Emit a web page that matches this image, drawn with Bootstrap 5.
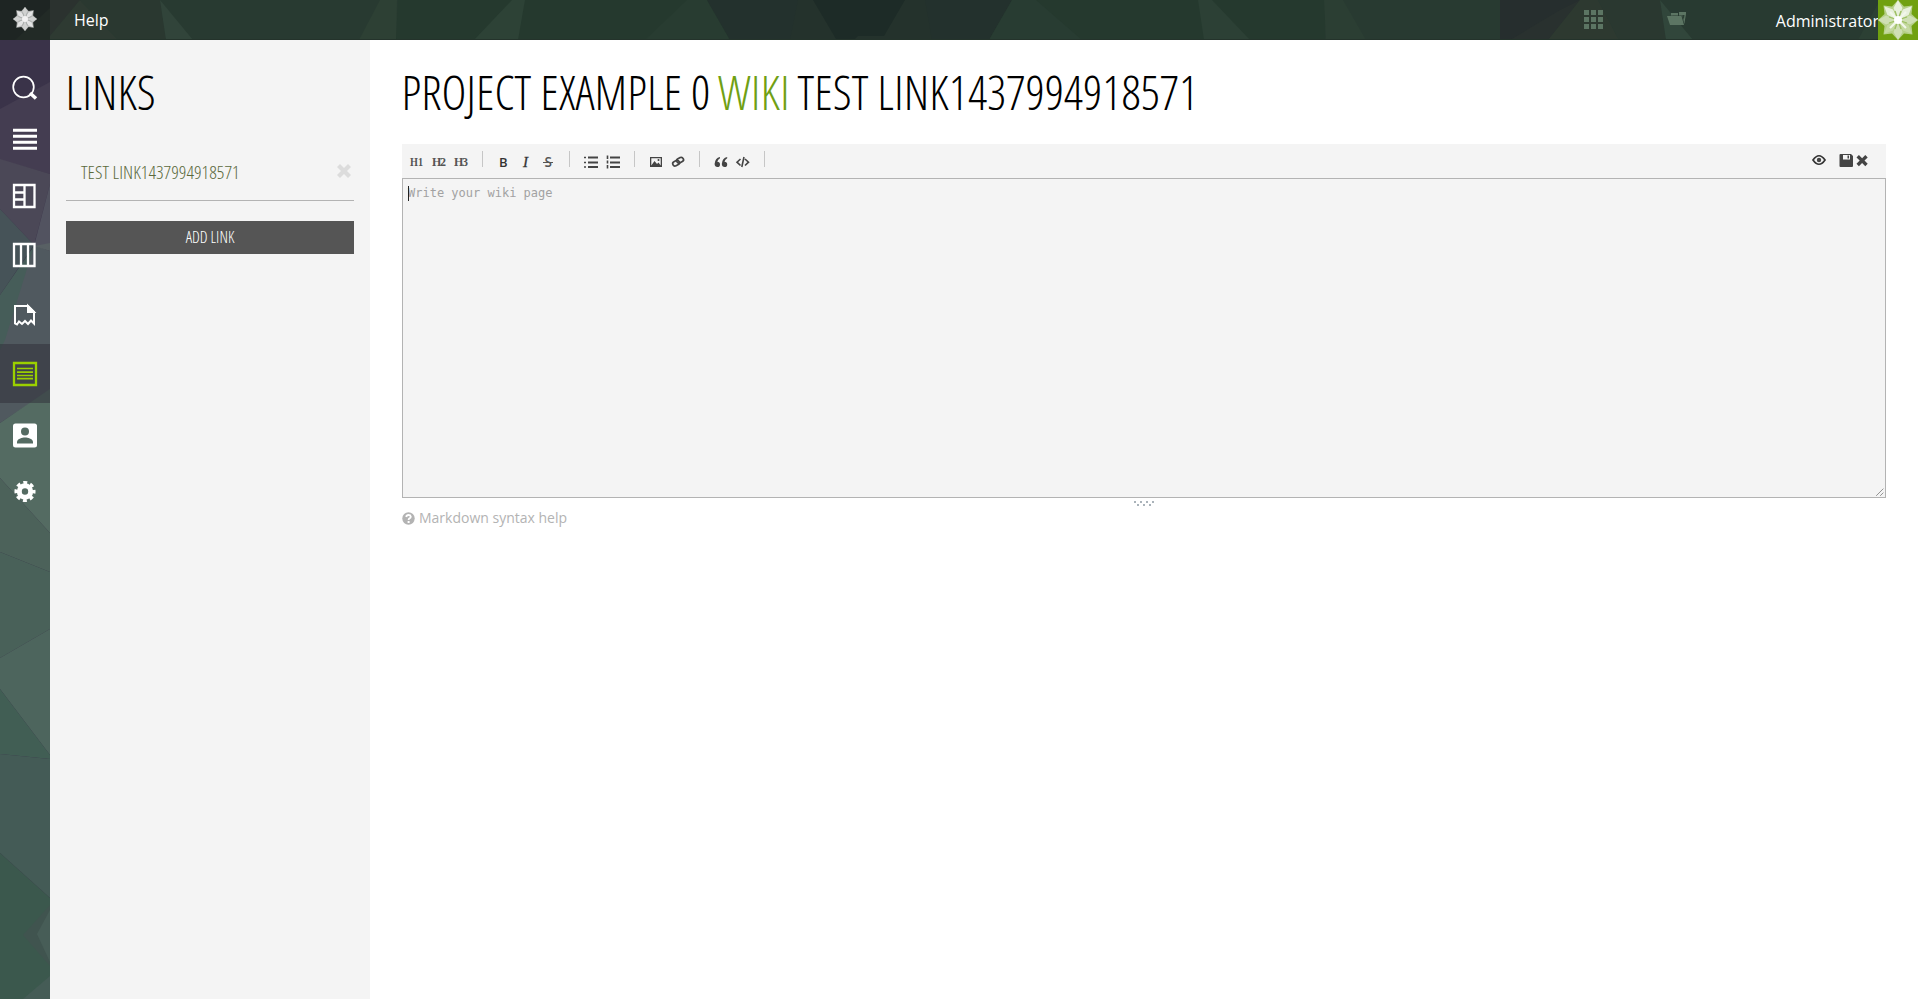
<!DOCTYPE html>
<html lang="en">
<head>
<meta charset="utf-8">
<title>Wiki</title>
<link rel="stylesheet" href="https://cdn.jsdelivr.net/npm/bootstrap@5.3.0/dist/css/bootstrap.min.css">
<style>
body{font-family:"Open Sans","Noto Sans",sans-serif;background:#fff;overflow:hidden}
.topbar{height:40px;background:#283a31}
.backdrop{left:0;top:0;z-index:0}
.topbar>*:not(.backdrop),.rail>*:not(.backdrop){position:relative;z-index:1}
.logo-cell{width:50px;height:40px}
.condensed{font-family:"Open Sans Condensed Light","OpenSans-CondensedLight","Open Sans Light","Open Sans",sans-serif;font-weight:300;font-stretch:75%;text-transform:uppercase}
.rail{width:50px;background:#48605a}
.rail a{display:block;height:59px;line-height:0}
.rail svg{display:block}
.rail .on{background:rgba(45,45,55,.5)}
.links{width:320px;background:#f4f4f4;padding:28px 16px 0}
.links h1,.page h1{font-size:48px;line-height:48px;color:#000;margin:0 0 0 -.5px;white-space:nowrap}
.link-row{height:59px;margin-top:26px;border-bottom:1px solid #b3b3b3;padding:3px 3px 0 15px}
.link-row a{font-size:19px;color:#5b6a3c}
.link-row svg{margin-bottom:3px}
.add-btn{height:33px;background:#555;color:#fff;font-size:16px;line-height:31px;border:0;border-radius:0;margin-top:20px;padding:0}
.page{padding:28px 32px 0}
.page h1 span{color:#70a013;margin:0 -1.2px}
.tools{height:34px;background:#f4f4f4;margin-top:28px}
.editor{height:320px;border:1px solid #b3b3b3;background:#f4f4f4;font:12px/18px "DejaVu Sans Mono",monospace;color:#a2a2a2;padding:5px}
.caret{left:5px;top:7px;width:1px;height:15px;background:#222}
.grip{right:1px;bottom:1px}
.mdhelp{font-size:14px;line-height:20px;color:#b3b3b3;margin-top:1px}
</style>
</head>
<body class="vh-100 d-flex flex-column">
<svg width="0" height="0" class="position-absolute"><defs>
<path id="star" d="M0-20L6-13.500L14.500-14.500L13.500-6L20 0L13.500 6L14.500 14.500L6 13.500L0 20L-6 13.500L-14.500 14.500L-13.500 6L-20 0L-13.500-6L-14.500-14.500L-6-13.500Z"/>
<path id="kite" d="M0 0L-4.500-12L0-20L4.500-12Z"/>
<path id="kite2" d="M0 0L-4-11L0-19.500L4-11Z"/>
<path id="cross" d="M3 0L7 4L11 0L14 3L10 7L14 11L11 14L7 10L3 14L0 11L4 7L0 3Z"/>
</defs></svg>
<header class="topbar d-flex align-items-center flex-shrink-0 position-relative">
<svg class="backdrop position-absolute" width="1918" height="40">
<path fill="#25392e" d="M398 0H1325V40H396Z"/>
<path fill="#2b322f" d="M50 0H80L50 36Z"/><path fill="#2e3a32" d="M80 0L118 40H50V36Z"/><path fill="#2a3830" d="M80 0H160L166 40H118Z"/>
<path fill="#31443a" d="M160 0L193 40H166Z"/><path fill="#2d4034" d="M380 0H397L396 40H359Z"/>
<path fill="#2d4236" d="M512 0H525L518 40H474Z"/><path fill="#283c31" d="M687 0H707L730 40H645Z"/>
<path fill="#23312d" d="M707 0H1012L989 40H730Z"/><path fill="#24322c" d="M798 0H925L932 40H790Z"/><path fill="#1d2b27" d="M813 0H905L884 36H858L855 39H836Z"/>
<path fill="#283c32" d="M1012 0H1036L1082 40H989Z"/><path fill="#2c4035" d="M1198 0H1212L1250 40H1204Z"/><path fill="#2b3e33" d="M1324 0H1343L1366 40H1326Z"/>
<path fill="#262e2e" d="M1500 0H1580L1548 40H1500Z"/><path fill="#29312f" d="M1560 10L1510 40H1548L1580 0Z"/><path fill="#2d3930" d="M1580 0H1598L1619 40H1548Z"/><path fill="#2a3830" d="M1598 0H1660L1666 40H1619Z"/>
<path fill="#31463b" d="M1660 0L1693 40H1666Z"/><path fill="#2c4034" d="M1880 0V40H1858Z"/>
<path fill="#1e2523" d="M0 0H50V40H0Z"/><path fill="#222a26" d="M50 8V40H15Z"/><path stroke="#24332b" d="M50 39.5H1918"/>
</svg>
<a class="logo-cell"><svg width="50" height="40"><g transform="translate(25 19) scale(.6)"><use href="#star" fill="#b4b6b5"/><g fill="#e3e4e4"><use href="#kite2" transform="rotate(45)"/><use href="#kite2" transform="rotate(135)"/><use href="#kite2" transform="rotate(225)"/><use href="#kite2" transform="rotate(315)"/></g><g fill="#cfd1d0"><use href="#kite"/><use href="#kite" transform="rotate(90)"/><use href="#kite" transform="rotate(180)"/><use href="#kite" transform="rotate(270)"/></g><path stroke="#a0a4a2" stroke-width="1.300" d="M-4-11L4 11M4-11L-4 11M-11-4L11 4M-11 4L11-4"/><circle r="5" fill="#f2f2f2"/></g></svg></a>
<a class="text-white text-decoration-none ms-4">Help</a>
<div class="ms-auto d-flex align-items-center">
<svg width="19" height="19" fill="#5c7563" style="margin:-2px 64px 0 0"><path d="M0 0h5v5H0zM7 0h5v5H7zM14 0h5v5h-5zM0 7h5v5H0zM7 7h5v5H7zM14 7h5v5h-5zM0 14h5v5H0zM7 14h5v5H7zM14 14h5v5h-5z"/></svg>
<svg width="19" height="14" fill="#5c7563" style="margin:-2px 90px 0 0"><path d="M0 4H14.500L17 13H3ZM4 3.400V1H11V3.400ZM12 3.400V0H19V2L17.300 12L15.400 3.400Z"/><path fill="#2b3f34" d="M15.200 3H17.500L16.900 8Z"/></svg>
<span class="text-white" style="margin:2px -1px 0 0">Administrator</span>
<svg width="40" height="40"><path fill="#70a010" d="M0 0h40v40H0z"/><g transform="translate(20 20)"><use href="#star" fill="#b5cf87"/><g fill="#c5d9a1"><use href="#kite2" transform="rotate(45)"/><use href="#kite2" transform="rotate(135)"/><use href="#kite2" transform="rotate(225)"/></g><g fill="#cfdfb4"><use href="#kite" transform="rotate(90)"/><use href="#kite" transform="rotate(180)"/><use href="#kite" transform="rotate(270)"/></g><g fill="#e8f0dc"><use href="#kite"/><use href="#kite2" transform="rotate(-45)"/><use href="#kite2" transform="rotate(45)"/></g><g fill="none" stroke="#9dbf62" stroke-width="1.300"><path d="M-3-9L3 9M3-9L-3 9M-9-3L9 3M-9 3L9-3"/></g><path stroke="#f3f7ec" stroke-width="2" d="M-8-8L8 8M-8 8L8-8"/><circle r="4" fill="#fff"/></g></svg>
</div>
</header>
<div class="d-flex flex-grow-1">
<nav class="rail position-relative flex-shrink-0">
<svg class="backdrop position-absolute" width="50" height="959" viewBox="0 40 50 959">
<path fill="#3a3349" d="M0 40H50V999H0Z"/><path fill="#443d51" d="M0 109L50 82V174L0 160Z"/><path fill="#4b4857" d="M0 159L50 174V184L34 245L0 209Z"/><path fill="#525360" d="M50 184V247L34 246Z"/><path fill="#465358" d="M0 209L34 245L0 295Z"/><path fill="#50595f" d="M34 245L50 251V390L0 423V340Z"/><path fill="#465d59" d="M0 295L34 246L5 340L0 350Z"/><path fill="#586064" d="M34 246L50 243V251Z"/>
<path fill="#546b62" d="M0 423L50 389V533L0 478Z"/><path fill="#4c625a" d="M0 478L50 533V572L0 552Z"/><path fill="#496159" d="M0 552L50 572V629L0 658Z"/><path fill="#4d655d" d="M0 658L50 629V755L0 689Z"/><path fill="#415e54" d="M0 689L50 755V759L0 754Z"/><path fill="#445b56" d="M0 754L50 759V898L0 853Z"/><path fill="#3b584d" d="M0 853L50 898V999H0Z"/><path fill="#40544f" d="M50 905L23 935L50 966Z"/><path fill="#475d57" d="M50 910L37 934L50 962Z"/><path fill="#455c56" d="M50 976V999H23Z"/>
</svg>
<a style="height:72px"><svg width="50" height="72" fill="none" stroke="#fff"><circle cx="23.500" cy="47" r="10.300" stroke-width="1.700"/><path stroke-width="3.500" d="M30 53L36 58.500"/></svg></a>
<a><svg width="50" height="59" stroke="#fff" stroke-width="3"><path d="M13 18.200H37M13 24.200H37M13 30.200H37M13 36.200H37"/></svg></a>
<a style="height:53px"><svg width="50" height="53" fill="none" stroke="#fff" stroke-width="2.300"><path d="M14 14H34.500V36H14ZM24.500 14V36M14 21.500H24.500M14 28.500H24.500"/></svg></a>
<a style="height:58px"><svg width="50" height="58" fill="none" stroke="#fff" stroke-width="2.300"><path d="M14 20H34.500V42H14ZM21 20V42M28 20V42"/></svg></a>
<a style="height:62px"><svg width="50" height="62" fill="none" stroke="#fff" stroke-width="2"><path d="M15 41.500V24H28L34 30V41.500L31 38.500L28 42L25 39L22 42L19 39.500L17 42.500Z"/><path fill="#fff" d="M28 24V30H34Z"/></svg></a>
<a class="on"><svg width="50" height="59" fill="none" stroke="#9bd000" stroke-width="2.300"><path d="M14 19H36V41H14Z"/><path stroke-width="1.700" d="M17 24.500H33M17 28.200H33M17 31.500H33M17 34.700H33"/></svg></a>
<a><svg width="50" height="59"><rect x="13" y="20.500" width="24" height="24" rx="2.500" fill="#fff"/><g fill="#546b62"><circle cx="25" cy="28.500" r="4"/><path d="M17 40.500V38.500C18 35.500 22 34.500 25 34.500S32 35.500 33 38.500V40.500Z"/></g></svg></a>
<a><svg width="50" height="59" fill="none"><circle cx="25" cy="29.500" r="5.700" stroke="#fff" stroke-width="5"/><circle cx="25" cy="29.500" r="8.800" stroke="#fff" stroke-width="3.500" stroke-dasharray="3.800 3.110" stroke-dashoffset="1.900"/></svg></a>
</nav>
<aside class="links flex-shrink-0">
<h1 class="condensed">Links</h1>
<div class="link-row d-flex align-items-center justify-content-between"><a class="condensed text-decoration-none">Test link1437994918571</a><svg width="14" height="14" fill="#dcdcdc"><use href="#cross"/></svg></div>
<button class="add-btn btn w-100 condensed">Add link</button>
</aside>
<main class="page flex-grow-1">
<h1 class="condensed">Project Example 0 <span>Wiki</span> test link1437994918571</h1>
<div class="tools"><svg width="1484" height="34" fill="#444">
<g font-family="Liberation Serif,serif" font-size="12" font-weight="bold" fill="#555"><text x="8" y="22" textLength="13" lengthAdjust="spacingAndGlyphs">H1</text><text x="30" y="22" textLength="14">H2</text><text x="52" y="22" textLength="14">H3</text></g>
<path stroke="#c6c6c6" d="M80.500 7V23M167.500 7V23M232.500 7V23M297.500 7V23M362.500 7V23"/>
<g font-family="Open Sans,sans-serif" fill="#333"><text x="97" y="22.500" font-size="13" font-weight="600">B</text><text x="121" y="22.500" font-family="Liberation Serif,serif" font-style="italic" font-size="15" stroke="#333" stroke-width=".3">I</text><text x="142.500" y="23" font-size="13.500" font-weight="600" fill="#555">S</text></g>
<path stroke="#555" d="M141 18.500H151"/>
<path stroke="#444" stroke-width="1.800" d="M186 13.500H196M186 18.500H196M186 23H196M208 13.500H218M208 18.500H218M208 23H218"/><path stroke="#444" stroke-width="1.600" d="M182 13.500H184M182 18.500H184M182 23H184M205.500 11.500V15M205.500 16.500V19.500M205.500 21V24.500"/>
<path fill-rule="evenodd" d="M248 13H260V23H248ZM249.300 14.300V21.500L252.500 17L255 20L256.500 18.500L258.700 21.500V14.300Z"/><circle cx="256.500" cy="16" r="1"/>
<g fill="none" stroke="#444" stroke-width="1.700"><rect x="270.500" y="17" width="7" height="4.500" rx="2.200" transform="rotate(-28 274 19)"/><rect x="274.500" y="14" width="7" height="4.500" rx="2.200" transform="rotate(-28 278 16)"/></g>
<path id="quote" d="M318 13Q313 14 312.600 20Q312.800 23 315.400 23T318 20.400T315.300 17.700Q315.800 15.200 318 14.200Z"/><use href="#quote" x="7.200"/>
<path fill="none" stroke="#444" stroke-width="1.600" d="M338.500 15L335 18.200L338.500 21.500M343 15L346.500 18.200L343 21.500M342 13L339.800 23"/>
<path fill="none" stroke="#333" stroke-width="1.700" d="M1411 16Q1417 7.500 1423 16Q1417 24.500 1411 16Z"/><circle cx="1417" cy="16" r="2.200"/>
<path fill-rule="evenodd" d="M1438.500 10H1449L1451 12V22Q1451 23 1450 23H1438.500Q1437.500 23 1437.500 22V11Q1437.500 10 1438.500 10ZM1441 11V15.500H1448V11ZM1445.500 11.500H1447V14.500H1445.500Z"/><use href="#cross" transform="translate(1454.500 11) scale(.8)"/>
</svg></div>
<div class="editor position-relative">Write your wiki page<i class="caret position-absolute"></i><svg class="grip position-absolute" width="8" height="8" stroke="#555" stroke-dasharray="1 .414"><path d="M.5 7.500L7.500 .5M4.500 7.500L7.500 4.500"/></svg></div>
<svg class="d-block mx-auto" width="22" height="9" fill="#aab3ba"><path d="M1 3h2v2H1zM7 3h2v2H7zM13 3h2v2h-2zM19 3h2v2h-2zM4 6h2v2H4zM10 6h2v2h-2zM16 6h2v2h-2z"/></svg>
<a class="mdhelp d-flex align-items-center text-decoration-none"><svg width="13" height="14" class="me-1"><circle cx="6.500" cy="7.500" r="6.200" fill="#b3b3b3"/><path fill="none" stroke="#fff" stroke-width="1.800" d="M4.200 6Q4.500 4 6.500 4T8.800 5.700Q8.800 6.800 7.500 7.300Q6.600 7.700 6.600 9"/><path fill="#fff" d="M5.600 10h2v2h-2z"/></svg>Markdown syntax help</a>
</main>
</div>
<script src="https://cdn.jsdelivr.net/npm/bootstrap@5.3.0/dist/js/bootstrap.bundle.min.js"></script>
</body>
</html>
